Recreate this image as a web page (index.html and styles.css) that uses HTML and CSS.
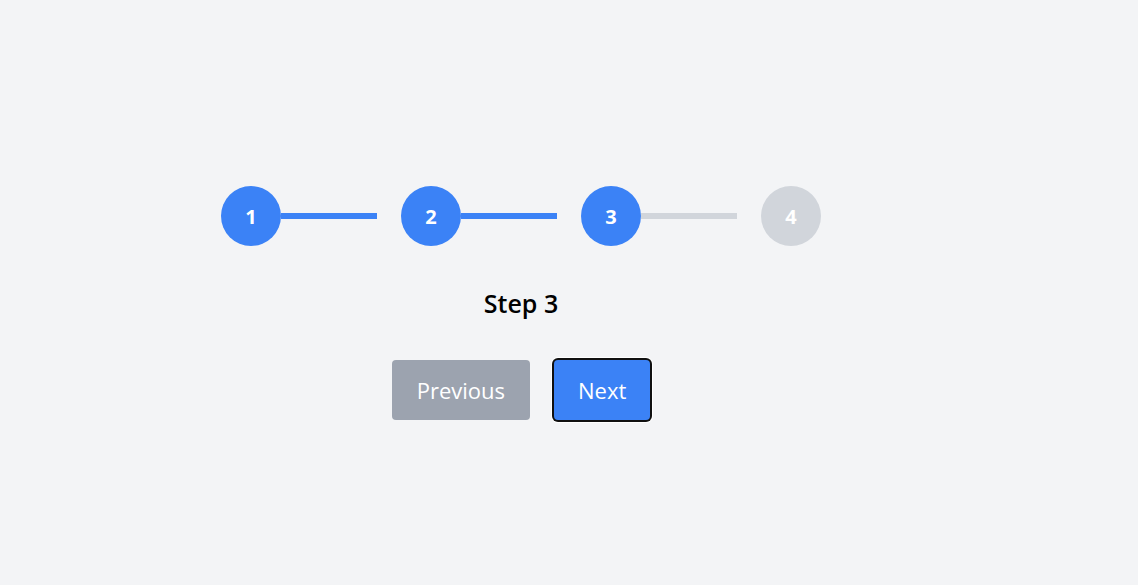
FILE: index.html
```html
<!DOCTYPE html>
<html lang="en">
<head>
<meta charset="utf-8">
<title>Stepper</title>
<link rel="stylesheet" href="styles.css">
</head>
<body>
<div class="wizard">
  <div class="stepper">
    <div class="step">
      <div class="circle active">1</div>
      <div class="line active"></div>
    </div>
    <div class="step">
      <div class="circle active">2</div>
      <div class="line active"></div>
    </div>
    <div class="step">
      <div class="circle active">3</div>
      <div class="line"></div>
    </div>
    <div class="step">
      <div class="circle">4</div>
    </div>
  </div>
  <h2 class="title">Step 3</h2>
  <div class="actions">
    <button class="btn btn-prev">Previous</button>
    <button class="btn btn-next focused">Next</button>
  </div>
</div>
</body>
</html>
```
FILE: styles.css
```css
html, body {
  margin: 0;
  padding: 0;
}
body {
  background: #f3f4f6;
  font-family: "Open Sans", "Noto Sans", sans-serif;
  height: 585px;
}
.wizard {
  width: 600px;
  margin-left: 221px;
  padding-top: 186px;
  display: flex;
  flex-direction: column;
  align-items: center;
}
.stepper {
  display: flex;
  align-items: center;
  width: 600px;
}
.step {
  display: flex;
  align-items: center;
}
.circle {
  width: 60px;
  height: 60px;
  border-radius: 50%;
  background: #d1d5db;
  color: #fff;
  font-weight: 700;
  font-size: 20px;
  display: flex;
  align-items: center;
  justify-content: center;
}
.circle.active {
  background: #3b82f6;
}
.line {
  width: 96px;
  height: 6px;
  background: #d1d5db;
  margin-right: 24px;
}
.line.active {
  background: #3b82f6;
}
.title {
  margin: 40px 0 0;
  font-size: 25px;
  line-height: 34px;
  font-weight: 600;
  color: #000;
}
.actions {
  display: flex;
  gap: 24px;
  margin-top: 40px;
}
.btn {
  font-family: inherit;
  font-size: 22px;
  line-height: 28px;
  padding: 16px 25px;
  border: none;
  border-radius: 4px;
  color: #fff;
  cursor: pointer;
}
.btn-prev {
  background: #9ca3af;
}
.btn-next {
  padding: 16px 24px;
  background: #3b82f6;
}
.btn.focused {
  box-shadow: 0 0 0 2px #101010, 0 0 0 3px #fff;
}
```
